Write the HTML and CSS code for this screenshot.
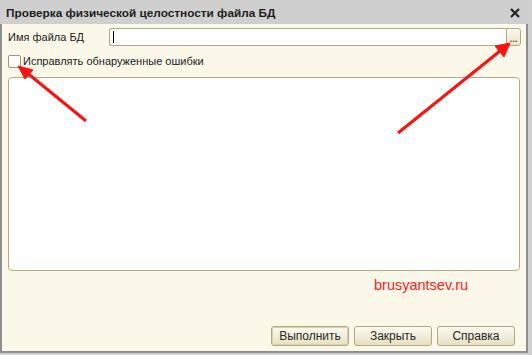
FILE: index.html
```html
<!DOCTYPE html>
<html lang="ru">
<head>
    <meta charset="UTF-8">
    <link rel="stylesheet" href="styles.css">
    <title>Проверка физической целостности файла БД</title>
</head>
<body>
    <div class="window">
        <div class="title-bar">
            <span class="title">Проверка физической целостности файла БД</span>
            <svg class="close" width="10" height="10" viewBox="0 0 10 10">
                <path d="M1 1 L9 9 M9 1 L1 9" stroke="#222" stroke-width="2.2"/>
            </svg>
        </div>
        <div class="content">
            <div class="file-row">
                <label class="file-label">Имя файла БД</label>
                <div class="file-input"><span class="caret"></span></div>
                <button class="choose-button">...</button>
            </div>
            <div class="check-row">
                <span class="checkbox"></span>
                <span>Исправлять обнаруженные ошибки</span>
            </div>
            <div class="log-area"></div>
            <div class="watermark">brusyantsev.ru</div>
            <div class="buttons">
                <button class="dlg-button default">Выполнить</button>
                <button class="dlg-button">Закрыть</button>
                <button class="dlg-button">Справка</button>
            </div>
        </div>

        <!-- arrows -->
        <svg class="arrows" width="532" height="355" viewBox="0 0 532 355">
            <g stroke="#ff1010" stroke-width="3" fill="#ff1010">
                <line x1="86" y1="121" x2="26" y2="72"/>
                <polygon points="18,66 33,70 25,79" stroke-width="1"/>
                <line x1="398" y1="133" x2="500" y2="51"/>
                <polygon points="510,43 504,57 495,46" stroke-width="1"/>
            </g>
        </svg>
    </div>
</body>
</html>
```

FILE: styles.css
```css
body {
    margin: 0;
    padding: 0;
    width: 532px;
    height: 355px;
    background-color: #d0d0d0;
    font-family: "Liberation Sans", Arial, sans-serif;
    font-size: 11px;
    color: #1c1c1c;
    overflow: hidden;
}

.window {
    position: relative;
    width: 524px;
    height: 351px;
    border: 2px solid #8d8d8d;
    border-top: 0;
    display: flex;
    flex-direction: column;
    background-color: #fbf8e9;
}

.title-bar {
    height: 24px;
    background-color: #cfcfcf;
    display: flex;
    align-items: center;
    justify-content: space-between;
    padding: 0 8px 0 4px;
    margin: 0 -2px;
    border-left: 2px solid #cfcfcf;
}

.title {
    font-weight: bold;
    font-size: 11.8px;
    color: #1e1e1e;
    padding-top: 1px;
}

.close {
    margin-top: 2px;
}

.content {
    flex: 1;
    display: flex;
    flex-direction: column;
    padding: 4px 5px 5px 6px;
}

.file-row {
    display: flex;
    align-items: center;
    height: 18px;
}

.file-label {
    width: 101px;
}

.file-input {
    flex: 1;
    height: 16px;
    background-color: #ffffff;
    border: 1px solid #b3aa84;
    border-right: 0;
    border-radius: 3px 0 0 3px;
    display: flex;
    align-items: center;
    padding-left: 3px;
}

.caret {
    width: 1px;
    height: 12px;
    background-color: #000000;
}

.choose-button {
    width: 15px;
    height: 18px;
    padding: 4px 0 0;
    border: 1px solid #b3aa84;
    border-radius: 0 3px 3px 0;
    background: linear-gradient(#fbf9ef, #e9e3c9);
    color: #5a4a1c;
    font-family: "Liberation Sans", Arial, sans-serif;
    font-size: 9px;
    font-weight: bold;
    line-height: 12px;
    letter-spacing: 0;
}

.check-row {
    display: flex;
    align-items: center;
    gap: 2px;
    margin-top: 8px;
    height: 14px;
}

.checkbox {
    width: 11px;
    height: 11px;
    border: 1px solid #9f9773;
    border-radius: 2px;
    background-color: #ffffff;
}

.log-area {
    margin-top: 9px;
    height: 192px;
    margin-right: 1px;
    background-color: #ffffff;
    border: 1px solid #b3aa84;
    border-radius: 4px;
}

.watermark {
    margin-top: 5px;
    padding-left: 366px;
    font-size: 14.5px;
    line-height: 18px;
    color: #ff2020;
}

.buttons {
    margin-top: auto;
    display: flex;
    justify-content: flex-end;
    gap: 5px;
    padding-right: 6px;
}

.dlg-button {
    width: 78px;
    height: 20px;
    padding: 0;
    border: 1px solid #b1a87f;
    border-radius: 3px;
    background: linear-gradient(#fcfaf1, #e7e0c5);
    font-family: "Liberation Sans", Arial, sans-serif;
    font-size: 12px;
    color: #2a2a2a;
}

.dlg-button.default {
    box-shadow: inset 0 0 0 1px #ddd3a8;
}

.arrows {
    position: absolute;
    left: -2px;
    top: 0;
    pointer-events: none;
}
```
